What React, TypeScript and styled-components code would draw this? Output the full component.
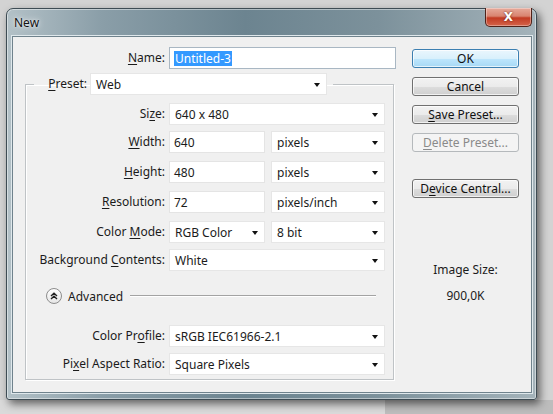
import React from 'react'
import styled, { createGlobalStyle } from 'styled-components'

const GlobalStyle = createGlobalStyle`
	* { box-sizing: border-box; }
	html, body {
		margin: 0;
		padding: 0;
	}
	body {
		width: 553px;
		height: 414px;
		overflow: hidden;
		font-family: "Noto Sans", "Open Sans", sans-serif;
		font-size: 12px;
		color: #1b1b1b;
		background:
			linear-gradient(90deg, #dadada 0 385px, #bdbdbd 385px) bottom / 100% 14px no-repeat,
			#d3d3d3;
	}
`

const Desktop = styled.div`
	padding: 8px 0 0 6px;
`

const Window = styled.div`
	width: 531px;
	height: 392px;
	display: flex;
	flex-direction: column;
	padding: 0 4px 6px 5px;
	border: 1px solid #3e4c54;
	border-radius: 7px 7px 3px 3px;
	background: linear-gradient(90deg, #b3c1c7 0%, #8a9ea8 18%, #6c8490 45%, #7c919b 70%, #a4b3ba 100%);
	box-shadow: 3px 4px 9px rgba(0, 0, 0, 0.55), inset 0 0 0 1px rgba(255, 255, 255, 0.45);
`

const TitleBar = styled.div`
	height: 27px;
	display: flex;
	align-items: flex-start;
	justify-content: space-between;
`

const Title = styled.span`
	margin: 5px 0 0 2px;
	font-size: 12px;
	color: #111;
	text-shadow: 0 0 6px rgba(255, 255, 255, 0.9), 0 0 2px rgba(255, 255, 255, 0.8);
`

const CloseButton = styled.div`
	width: 47px;
	height: 19px;
	margin-top: -1px;
	display: flex;
	align-items: center;
	justify-content: center;
	border: 1px solid #4f2219;
	border-top: none;
	border-radius: 0 0 5px 5px;
	background: linear-gradient(180deg, #e6aa9b 0%, #d98470 45%, #c23b23 55%, #d4644a 100%);
	box-shadow: inset 0 0 0 1px rgba(255, 255, 255, 0.35);
	color: #fff;
	font-family: "DejaVu Sans", sans-serif;
	font-weight: bold;
	font-size: 12px;
	text-shadow: 0 0 2px #5a1a10;
`

const Client = styled.div`
	flex: 1;
	display: flex;
	gap: 16px;
	padding: 10px 12px 0 12px;
	background: #f0f0f0;
	border: 1px solid #6f828c;
	box-shadow: 0 0 0 1px #dfe8ec;
`

const FormPanel = styled.div`
	width: 371px;
	display: flex;
	flex-direction: column;
`

const Row = styled.div<{ $mt?: number }>`
	display: flex;
	align-items: center;
	gap: 4px;
	height: 22px;
	margin-top: ${p => p.$mt ?? 0}px;
`

const Label = styled.label<{ $w: number }>`
	width: ${p => p.$w}px;
	flex: none;
	text-align: right;
	white-space: nowrap;
	line-height: 16px;
	margin-top: -1px;
	u { text-decoration: underline; text-underline-offset: 2px; }
`

const TextField = styled.div<{ $w: number; $focus?: boolean }>`
	width: ${p => p.$w}px;
	height: 22px;
	flex: none;
	display: flex;
	align-items: center;
	padding-left: 4px;
	background: #fff;
	border: 1px solid ${p => (p.$focus ? '#a9b7c3' : '#e4e4e4')};
`

const Selected = styled.span`
	background: #3399ff;
	color: #fff;
	padding: 0 1px;
	line-height: 15px;
`

const Select = styled.div<{ $w: number }>`
	width: ${p => p.$w}px;
	height: 22px;
	flex: none;
	display: flex;
	align-items: center;
	justify-content: space-between;
	padding: 0 6px 0 5px;
	background: #fff;
	border: 1px solid #e6e6e6;

	&::after {
		content: '';
		border-left: 3.5px solid transparent;
		border-right: 3.5px solid transparent;
		border-top: 4px solid #111;
		margin-top: 1px;
	}
`

const Pair = styled.div`
	display: flex;
	gap: 6px;
`

const GroupBox = styled.fieldset`
	width: 369px;
	margin: 4px 0 0 0;
	padding: 0 0 4px 0;
	border: 1px solid #bfc3c6;
	box-shadow: inset 1px 1px 0 #fff, 1px 1px 0 #fff;
`

const Legend = styled.legend`
	margin-left: 8px;
	padding: 0 6px 0 13px;
	display: flex;
	align-items: center;
	gap: 3px;
	height: 22px;
`

const AdvancedRow = styled.div`
	display: flex;
	align-items: center;
	height: 16px;
	margin: 17px 17px 0 20px;
	gap: 6px;
`

const ToggleCircle = styled.div`
	width: 16px;
	height: 16px;
	flex: none;
	border-radius: 50%;
	border: 1px solid #8d8d8d;
	background: linear-gradient(180deg, #ffffff 0%, #e6e6e6 100%);
	display: flex;
	align-items: center;
	justify-content: center;
`

const Rule = styled.div`
	flex: 1;
	margin-left: 1px;
	height: 2px;
	border-top: 1px solid #a3a3a3;
	border-bottom: 1px solid #fff;
`

const ButtonColumn = styled.div`
	width: 109px;
	display: flex;
	flex-direction: column;
	align-items: stretch;
	padding-top: 2px;
`

const Button = styled.div<{ $primary?: boolean; $disabled?: boolean; $mt?: number }>`
	height: 19px;
	margin-top: ${p => p.$mt ?? 0}px;
	display: flex;
	align-items: center;
	justify-content: center;
	border-radius: 3px;
	border: 1px solid ${p => (p.$primary ? '#3c7fb1' : p.$disabled ? '#b5b9bc' : '#707070')};
	background: ${p =>
		p.$primary
			? 'linear-gradient(180deg, #eaf6fd 0%, #d9f0fc 50%, #bee6fd 51%, #a7d9f5 100%)'
			: p.$disabled
			? '#f4f4f4'
			: 'linear-gradient(180deg, #f2f2f2 0%, #ebebeb 50%, #dddddd 51%, #cfcfcf 100%)'};
	box-shadow: inset 0 0 0 1px ${p => (p.$disabled ? 'transparent' : 'rgba(255,255,255,0.7)')};
	color: ${p => (p.$disabled ? '#8a8a8a' : '#111')};
	u { text-decoration: underline; text-underline-offset: 2px; }
`

const InfoText = styled.div<{ $mt: number }>`
	margin-top: ${p => p.$mt}px;
	text-align: center;
	line-height: 16px;
`

function DoubleChevron() {
	return (
		<svg width="8" height="8" viewBox="0 0 8 8">
			<path d="M1 4 L4 1.2 L7 4 M1 7 L4 4.2 L7 7" fill="none" stroke="#222" strokeWidth="1.4" />
		</svg>
	)
}

const FW = 139

export default function App() {
	return (
		<>
			<GlobalStyle />
			<Desktop>
				<Window>
					<TitleBar>
						<Title>New</Title>
						<CloseButton>X</CloseButton>
					</TitleBar>
					<Client>
						<FormPanel>
							<Row>
								<Label $w={140}><u>N</u>ame:</Label>
								<TextField $w={227} $focus><Selected>Untitled-3</Selected></TextField>
							</Row>
							<GroupBox>
								<Legend>
									<Label $w={40}><u>P</u>reset:</Label>
									<Select $w={237}>Web</Select>
								</Legend>
								<Row $mt={8}>
									<Label $w={FW}>Si<u>z</u>e:</Label>
									<Select $w={216}>640 x 480</Select>
								</Row>
								<Row $mt={6}>
									<Label $w={FW}><u>W</u>idth:</Label>
									<Pair>
										<TextField $w={96}>640</TextField>
										<Select $w={114}>pixels</Select>
									</Pair>
								</Row>
								<Row $mt={8}>
									<Label $w={FW}><u>H</u>eight:</Label>
									<Pair>
										<TextField $w={96}>480</TextField>
										<Select $w={114}>pixels</Select>
									</Pair>
								</Row>
								<Row $mt={8}>
									<Label $w={FW}><u>R</u>esolution:</Label>
									<Pair>
										<TextField $w={96}>72</TextField>
										<Select $w={114}>pixels/inch</Select>
									</Pair>
								</Row>
								<Row $mt={8}>
									<Label $w={FW}>Color <u>M</u>ode:</Label>
									<Pair>
										<Select $w={96}>RGB Color</Select>
										<Select $w={114}>8 bit</Select>
									</Pair>
								</Row>
								<Row $mt={6}>
									<Label $w={FW}>Background <u>C</u>ontents:</Label>
									<Select $w={216}>White</Select>
								</Row>
								<AdvancedRow>
									<ToggleCircle><DoubleChevron /></ToggleCircle>
									<span>Advanced</span>
									<Rule />
								</AdvancedRow>
								<Row $mt={21}>
									<Label $w={FW}>Color Pr<u>o</u>file:</Label>
									<Select $w={216}>sRGB IEC61966-2.1</Select>
								</Row>
								<Row $mt={6}>
									<Label $w={FW}>Pi<u>x</u>el Aspect Ratio:</Label>
									<Select $w={216}>Square Pixels</Select>
								</Row>
							</GroupBox>
						</FormPanel>
						<ButtonColumn>
							<Button $primary>OK</Button>
							<Button $mt={9}>Cancel</Button>
							<Button $mt={9}><span><u>S</u>ave Preset...</span></Button>
							<Button $mt={9} $disabled><span><u>D</u>elete Preset...</span></Button>
							<Button $mt={27}><span>D<u>e</u>vice Central...</span></Button>
							<InfoText $mt={64}>Image Size:</InfoText>
							<InfoText $mt={10}>900,0K</InfoText>
						</ButtonColumn>
					</Client>
				</Window>
			</Desktop>
		</>
	)
}
